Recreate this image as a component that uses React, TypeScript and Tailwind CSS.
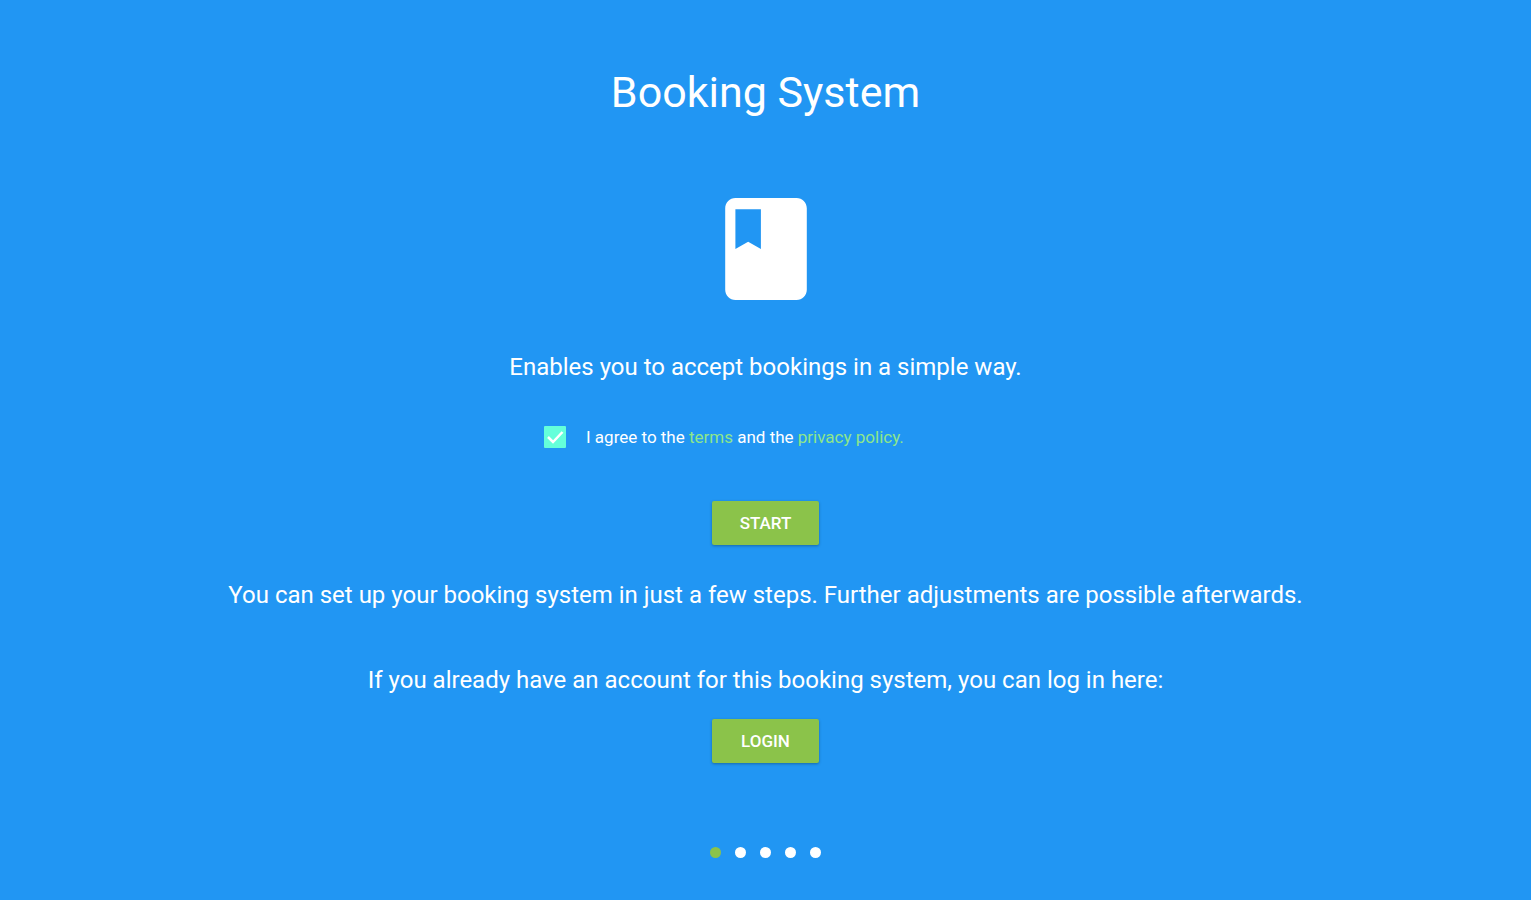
import { useState } from 'react';

const STEPS = [1, 2, 3, 4, 5];

function ActionButton({ children }: { children: string }) {
  return (
    <button
      type="button"
      className="flex h-11 w-[107px] items-center justify-center rounded-xs bg-[#8bc34a] text-[17px] leading-6 font-medium uppercase text-white shadow-[0_1px_3px_rgba(0,0,0,0.3)]"
    >
      {children}
    </button>
  );
}

function BookIcon() {
  return (
    <svg viewBox="4 2 16 20" className="h-[102px] w-[82px]" fill="#fff" aria-hidden="true">
      <path d="M18 2H6c-1.100 0-2 .9-2 2v16c0 1.100.9 2 2 2h12c1.100 0 2-.9 2-2V4c0-1.100-.9-2-2-2zM6 4.200h5v7.800l-2.500-1.400L6 12V4.200z" />
    </svg>
  );
}

export default function App() {
  const [agreed, setAgreed] = useState(true);
  const [step, setStep] = useState(1);

  return (
    <main className="flex min-h-screen flex-col items-center bg-[#2196f3] px-6 pt-16 pb-10 text-center font-['Roboto',sans-serif] text-2xl leading-8 text-white">
      <h1 className="text-[43px] leading-14">Booking System</h1>
      <div className="mt-[78px]">
        <BookIcon />
      </div>
      <p className="mt-[51px]">Enables you to accept bookings in a simple way.</p>

      <div className="mt-[42px] flex w-full max-w-[443px] items-center gap-5 text-left text-[17px] leading-6">
        <span className="relative flex size-[22px]">
          <input
            id="agree"
            type="checkbox"
            checked={agreed}
            onChange={(event) => setAgreed(event.target.checked)}
            className="size-full appearance-none rounded-[1px] border-2 border-[#64ffda] checked:bg-[#64ffda]"
          />
          {agreed && (
            <svg viewBox="0 0 22 22" className="pointer-events-none absolute inset-0" fill="none" stroke="#fff" strokeWidth="2.500" aria-hidden="true">
              <path d="M4 11l5 5L18.500 6" />
            </svg>
          )}
        </span>
        <label htmlFor="agree">
          I agree to the <a href="#terms" className="text-[#8ee68a]">terms</a> and the{' '}
          <a href="#privacy" className="text-[#8ee68a]">privacy policy.</a>
        </label>
      </div>

      <div className="mt-[52px]">
        <ActionButton>Start</ActionButton>
      </div>
      <p className="mt-[34px]">
        You can set up your booking system in just a few steps. Further adjustments are possible afterwards.
      </p>
      <p className="mt-[53px]">If you already have an account for this booking system, you can log in here:</p>
      <div className="mt-[23px]">
        <ActionButton>Login</ActionButton>
      </div>

      <nav aria-label="Setup steps" className="mt-[84px] flex gap-[14px]">
        {STEPS.map((n) => (
          <button
            key={n}
            type="button"
            aria-label={`Step ${n}`}
            aria-current={n === step ? 'step' : undefined}
            onClick={() => setStep(n)}
            className={n === step ? 'size-[11px] rounded-full bg-[#8bc34a]' : 'size-[11px] rounded-full bg-white'}
          />
        ))}
      </nav>
    </main>
  );
}
